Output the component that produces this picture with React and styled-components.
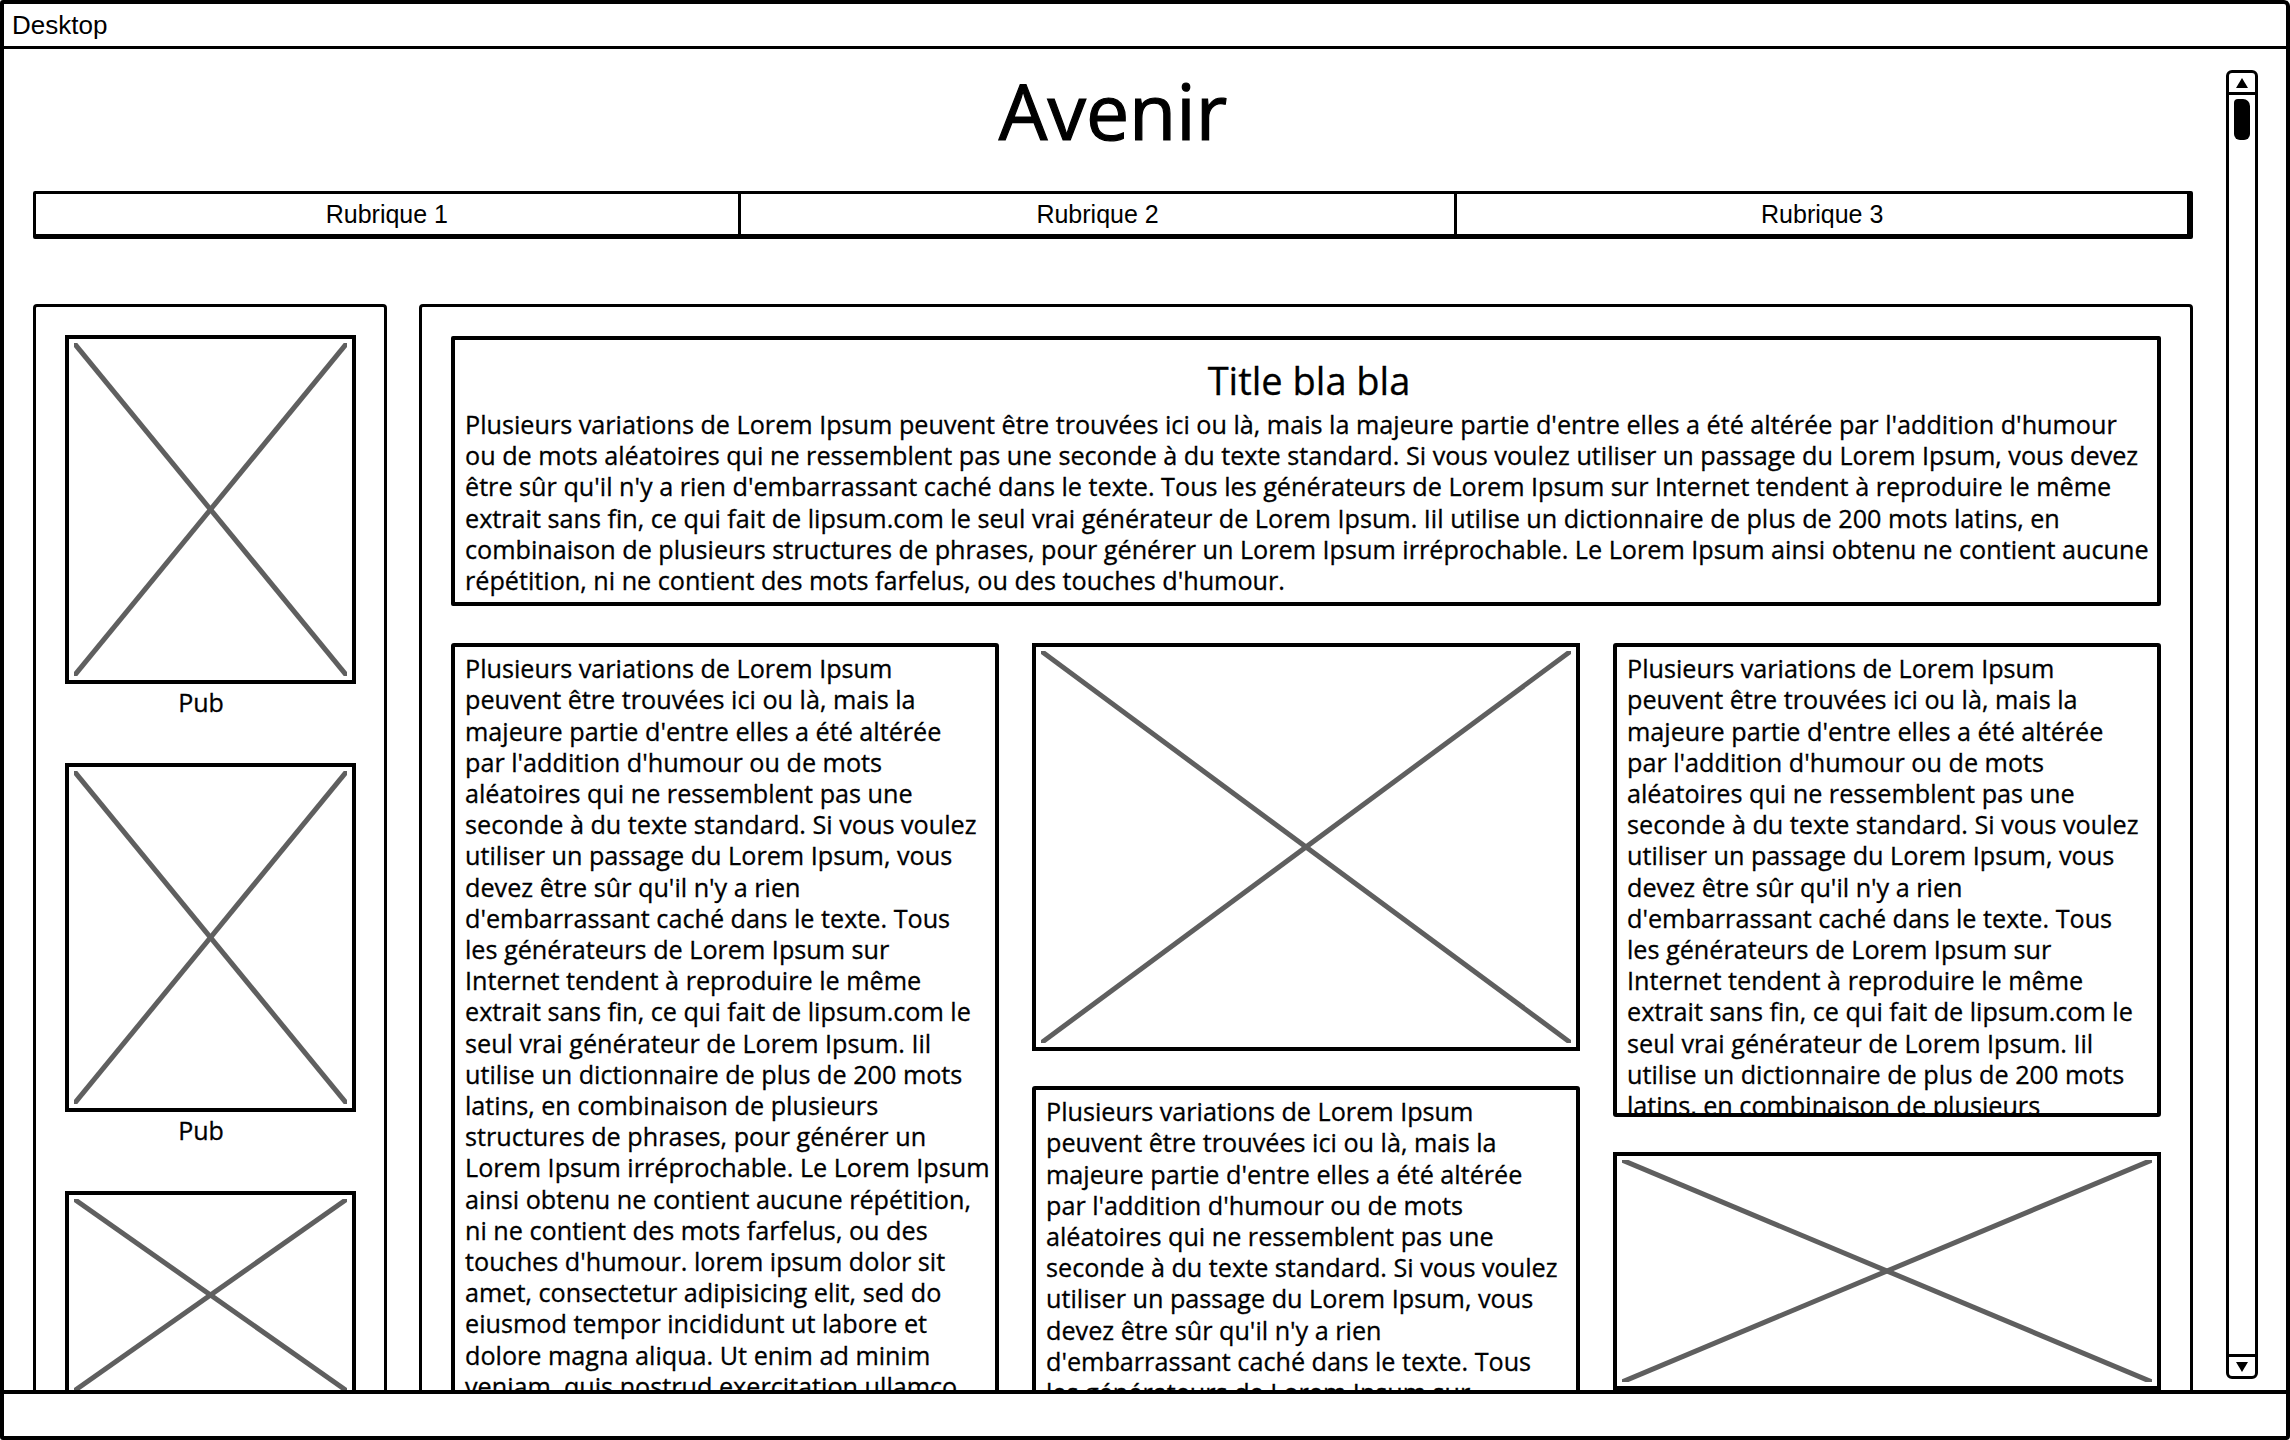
import React from 'react';
import styled, { createGlobalStyle } from 'styled-components';

const HEADER_LINES = [
  "Plusieurs variations de Lorem Ipsum peuvent être trouvées ici ou là, mais la majeure partie d'entre elles a été altérée par l'addition d'humour",
  "ou de mots aléatoires qui ne ressemblent pas une seconde à du texte standard. Si vous voulez utiliser un passage du Lorem Ipsum, vous devez",
  "être sûr qu'il n'y a rien d'embarrassant caché dans le texte. Tous les générateurs de Lorem Ipsum sur Internet tendent à reproduire le même",
  "extrait sans fin, ce qui fait de lipsum.com le seul vrai générateur de Lorem Ipsum. Iil utilise un dictionnaire de plus de 200 mots latins, en",
  "combinaison de plusieurs structures de phrases, pour générer un Lorem Ipsum irréprochable. Le Lorem Ipsum ainsi obtenu ne contient aucune",
  "répétition, ni ne contient des mots farfelus, ou des touches d'humour.",
];

const COLUMN_LINES = [
  "Plusieurs variations de Lorem Ipsum",
  "peuvent être trouvées ici ou là, mais la",
  "majeure partie d'entre elles a été altérée",
  "par l'addition d'humour ou de mots",
  "aléatoires qui ne ressemblent pas une",
  "seconde à du texte standard. Si vous voulez",
  "utiliser un passage du Lorem Ipsum, vous",
  "devez être sûr qu'il n'y a rien",
  "d'embarrassant caché dans le texte. Tous",
  "les générateurs de Lorem Ipsum sur",
  "Internet tendent à reproduire le même",
  "extrait sans fin, ce qui fait de lipsum.com le",
  "seul vrai générateur de Lorem Ipsum. Iil",
  "utilise un dictionnaire de plus de 200 mots",
  "latins, en combinaison de plusieurs",
  "structures de phrases, pour générer un",
  "Lorem Ipsum irréprochable. Le Lorem Ipsum",
  "ainsi obtenu ne contient aucune répétition,",
  "ni ne contient des mots farfelus, ou des",
];

const LONG_LINES = [
  ...COLUMN_LINES,
  "touches d'humour. lorem ipsum dolor sit",
  "amet, consectetur adipisicing elit, sed do",
  "eiusmod tempor incididunt ut labore et",
  "dolore magna aliqua. Ut enim ad minim",
  "veniam, quis nostrud exercitation ullamco",
  "laboris nisi ut aliquip ex ea commodo",
];

const SHORT_LINES = [...COLUMN_LINES, "touches d'humour."];

const NAV = [
  { label: 'Rubrique 1', grow: 705 },
  { label: 'Rubrique 2', grow: 717 },
  { label: 'Rubrique 3', grow: 733 },
];

const GlobalStyle = createGlobalStyle`
  html, body {
    margin: 0;
    padding: 0;
    background: #fff;
  }
  body {
    font-family: "Open Sans", "Noto Sans", sans-serif;
    color: #000;
  }
`;

const Window = styled.div`
  width: 2290px;
  height: 1440px;
  box-sizing: border-box;
  border: 4px solid #000;
  border-radius: 3px 6px 4px 3px;
  display: flex;
  flex-direction: column;
  overflow: hidden;
  background: #fff;
`;

const TitleBar = styled.div`
  flex: none;
  height: 42px;
  border-bottom: 3px solid #000;
  display: flex;
  align-items: center;
  padding-left: 8px;
  font-family: "Liberation Sans", Arial, sans-serif;
  font-size: 26px;
`;

const Viewport = styled.div`
  flex: 1;
  min-height: 0;
  display: flex;
  overflow: hidden;
`;

const Page = styled.div`
  flex: 1;
  min-width: 0;
  padding-left: 29px;
  display: flex;
  flex-direction: column;
`;

const SiteTitle = styled.h1`
  margin: 14px 0 32px;
  font-size: 77px;
  font-weight: 400;
  line-height: 96px;
  text-align: center;
  -webkit-text-stroke: 1.2px #000;
`;

const NavBar = styled.nav`
  flex: none;
  display: flex;
  height: 48px;
  box-sizing: border-box;
  border: 3px solid #000;
  border-right-width: 6px;
  border-bottom-width: 5px;
  border-radius: 2px;
`;

const NavItem = styled.div`
  flex: ${p => p.$grow} 1 0;
  display: flex;
  align-items: center;
  justify-content: center;
  font-family: "Liberation Sans", Arial, sans-serif;
  font-size: 25px;

  & + & {
    border-left: 3px solid #000;
  }
`;

const Body = styled.div`
  margin-top: 65px;
  display: flex;
  gap: 32px;
  align-items: flex-start;
`;

const Sidebar = styled.aside`
  flex: none;
  width: 354px;
  box-sizing: border-box;
  border: 3px solid #000;
  border-radius: 4px;
  padding: 28px 0 0;
  display: flex;
  flex-direction: column;
  align-items: center;
`;

const Ad = styled.div`
  display: flex;
  flex-direction: column;
  align-items: center;
  margin-bottom: 43px;
`;

const AdLabel = styled.div`
  font-size: 25px;
  line-height: 36px;
  padding-right: 18px;
  -webkit-text-stroke: 0.3px #000;
`;

const Frame = styled.div`
  flex: none;
  box-sizing: border-box;
  width: ${p => (p.$width ? `${p.$width}px` : '100%')};
  height: ${p => p.$height}px;
  border: 4px solid #000;
  padding: 4px 5px;
  background: #fff;

  svg {
    display: block;
    width: 100%;
    height: 100%;
  }
`;

const Main = styled.main`
  flex: 1;
  min-width: 0;
  box-sizing: border-box;
  border: 3px solid #000;
  border-radius: 4px;
  padding: 29px 29px 0;
`;

const Feature = styled.section`
  border: 4px solid #000;
  border-radius: 2px;
  padding: 20px 4px 6px 10px;
`;

const FeatureTitle = styled.h2`
  margin: 0 0 8px;
  font-size: 38px;
  font-weight: 400;
  line-height: 41px;
  text-align: center;
  -webkit-text-stroke: 0.3px #000;
`;

const Columns = styled.div`
  margin-top: 37px;
  display: grid;
  grid-template-columns: repeat(3, 1fr);
  column-gap: 33px;
  align-items: start;
`;

const Column = styled.div`
  display: flex;
  flex-direction: column;
  gap: 35px;
`;

const TextCard = styled.article`
  box-sizing: border-box;
  height: ${p => (p.$height ? `${p.$height}px` : 'auto')};
  overflow: hidden;
  border: 4px solid #000;
  border-radius: 3px;
  padding: 6px 4px 0 10px;
`;

const Line = styled.div`
  font-size: 25.2px;
  line-height: 31.2px;
  white-space: nowrap;
  -webkit-text-stroke: 0.3px #000;
`;

const ScrollTrack = styled.div`
  flex: none;
  width: 32px;
  box-sizing: border-box;
  margin: 21px 28px 11px 33px;
  border: 3px solid #000;
  border-radius: 6px;
  display: flex;
  flex-direction: column;
`;

const ScrollButton = styled.div`
  flex: none;
  height: 19px;
  display: flex;
  align-items: center;
  justify-content: center;
  ${p => (p.$down ? 'border-top: 3px solid #000;' : 'border-bottom: 3px solid #000;')}

  &::after {
    content: '';
    border-left: 6px solid transparent;
    border-right: 6px solid transparent;
    ${p => (p.$down ? 'border-top: 10px solid #000;' : 'border-bottom: 10px solid #000;')}
  }
`;

const Thumb = styled.div`
  flex: none;
  margin: 4px 5px 0;
  height: 41px;
  background: #000;
  border-radius: 4px 7px 6px 6px;
`;

const TrackSpace = styled.div`
  flex: 1;
`;

const StatusBar = styled.div`
  flex: none;
  height: 42px;
  border-top: 4px solid #000;
`;

function ImagePlaceholder({ width, height }) {
  return (
    <Frame $width={width} $height={height}>
      <svg viewBox="0 0 100 100" preserveAspectRatio="none">
        <line x1="0" y1="0" x2="100" y2="100" stroke="#5f5f5f" strokeWidth="5" vectorEffect="non-scaling-stroke" />
        <line x1="100" y1="0" x2="0" y2="100" stroke="#5f5f5f" strokeWidth="5" vectorEffect="non-scaling-stroke" />
      </svg>
    </Frame>
  );
}

const Lines = ({ lines }) => lines.map((l, i) => <Line key={i}>{l}</Line>);

export default function App() {
  return (
    <>
      <GlobalStyle />
      <Window>
        <TitleBar>Desktop</TitleBar>
        <Viewport>
          <Page>
            <SiteTitle>Avenir</SiteTitle>
            <NavBar>
              {NAV.map(n => (
                <NavItem key={n.label} $grow={n.grow}>{n.label}</NavItem>
              ))}
            </NavBar>
            <Body>
              <Sidebar>
                <Ad>
                  <ImagePlaceholder width={291} height={349} />
                  <AdLabel>Pub</AdLabel>
                </Ad>
                <Ad>
                  <ImagePlaceholder width={291} height={349} />
                  <AdLabel>Pub</AdLabel>
                </Ad>
                <Ad>
                  <ImagePlaceholder width={291} height={208} />
                </Ad>
              </Sidebar>
              <Main>
                <Feature>
                  <FeatureTitle>Title bla bla</FeatureTitle>
                  <Lines lines={HEADER_LINES} />
                </Feature>
                <Columns>
                  <Column>
                    <TextCard>
                      <Lines lines={LONG_LINES} />
                    </TextCard>
                  </Column>
                  <Column>
                    <ImagePlaceholder height={408} />
                    <TextCard>
                      <Lines lines={SHORT_LINES} />
                    </TextCard>
                  </Column>
                  <Column>
                    <TextCard $height={474}>
                      <Lines lines={SHORT_LINES} />
                    </TextCard>
                    <ImagePlaceholder height={238} />
                  </Column>
                </Columns>
              </Main>
            </Body>
          </Page>
          <ScrollTrack>
            <ScrollButton />
            <Thumb />
            <TrackSpace />
            <ScrollButton $down />
          </ScrollTrack>
        </Viewport>
        <StatusBar />
      </Window>
    </>
  );
}
